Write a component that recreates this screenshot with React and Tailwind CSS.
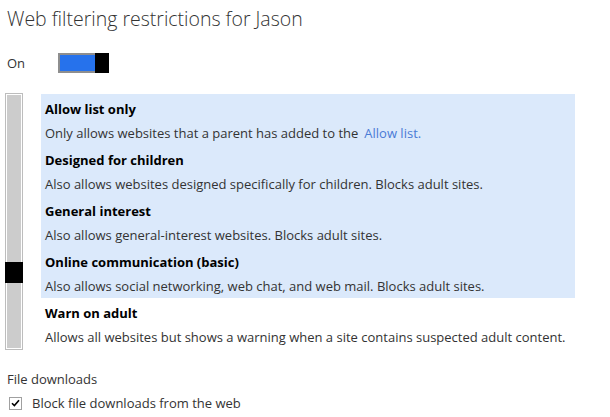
import React from "react";

const levels = [
  { title: "Allow list only", desc: "Only allows websites that a parent has added to the", link: "Allow list." },
  { title: "Designed for children", desc: "Also allows websites designed specifically for children. Blocks adult sites." },
  { title: "General interest", desc: "Also allows general-interest websites. Blocks adult sites." },
  { title: "Online communication (basic)", desc: "Also allows social networking, web chat, and web mail. Blocks adult sites." },
  { title: "Warn on adult", desc: "Allows all websites but shows a warning when a site contains suspected adult content." },
];

const selected = 3;

export default function App() {
  return (
    <div className="w-[610px] h-[417px] overflow-hidden bg-white text-[#333] font-['Open_Sans',sans-serif]">
      <h1 className="pl-[7px] pt-[5px] text-[19.5px] leading-[28px] font-light text-[#333]">
        Web filtering restrictions for Jason
      </h1>

      <div className="mt-[20px] flex items-center h-[20px]">
        <span className="w-[58px] pl-[7px] text-[13px] leading-[18px]">On</span>
        <div className="flex w-[51px] h-[20px]">
          <div className="flex-1 border-2 border-r-0 border-[#8e8e8e] bg-[#2672ec]" />
          <div className="w-[14px] bg-black" />
        </div>
      </div>

      <div className="mt-[20px] flex">
        <div className="relative ml-[5px] w-[18px] h-[257px] border border-[#bdbdbd] bg-white p-[1px]">
          <div className="h-full bg-[#cccccc]" />
          <div className="absolute left-[-1px] top-[168px] w-[18px] h-[21px] bg-black" />
        </div>

        <div className="ml-[18px] mt-[1px] w-[534px]">
          {levels.map((lv, i) => (
            <div
              key={lv.title}
              className={"h-[51px] pl-[4px] pt-[6px] " + (i <= selected ? "bg-[#dbe9fb]" : "")}
            >
              <div className="text-[13px] leading-[18px] font-bold text-black">{lv.title}</div>
              <div className="mt-[6px] text-[13px] leading-[18px] whitespace-nowrap">
                {lv.desc}
                {lv.link && <span className="ml-[6px] text-[#4a7bd6]">{lv.link}</span>}
              </div>
            </div>
          ))}
        </div>
      </div>

      <div className="mt-[20px] pl-[7px] text-[13px] leading-[18px]">File downloads</div>
      <label className="mt-[6px] flex items-center pl-[9px] text-[13px] leading-[18px]">
        <span className="w-[13px] h-[13px] border border-[#a0a0a0] flex items-center justify-center">
          <svg width="9" height="8" viewBox="0 0 9 8">
            <path d="M1 4.2 L3.4 6.6 L8 1.2" fill="none" stroke="#000" strokeWidth="1.6" />
          </svg>
        </span>
        <span className="ml-[10px]">Block file downloads from the web</span>
      </label>
    </div>
  );
}
